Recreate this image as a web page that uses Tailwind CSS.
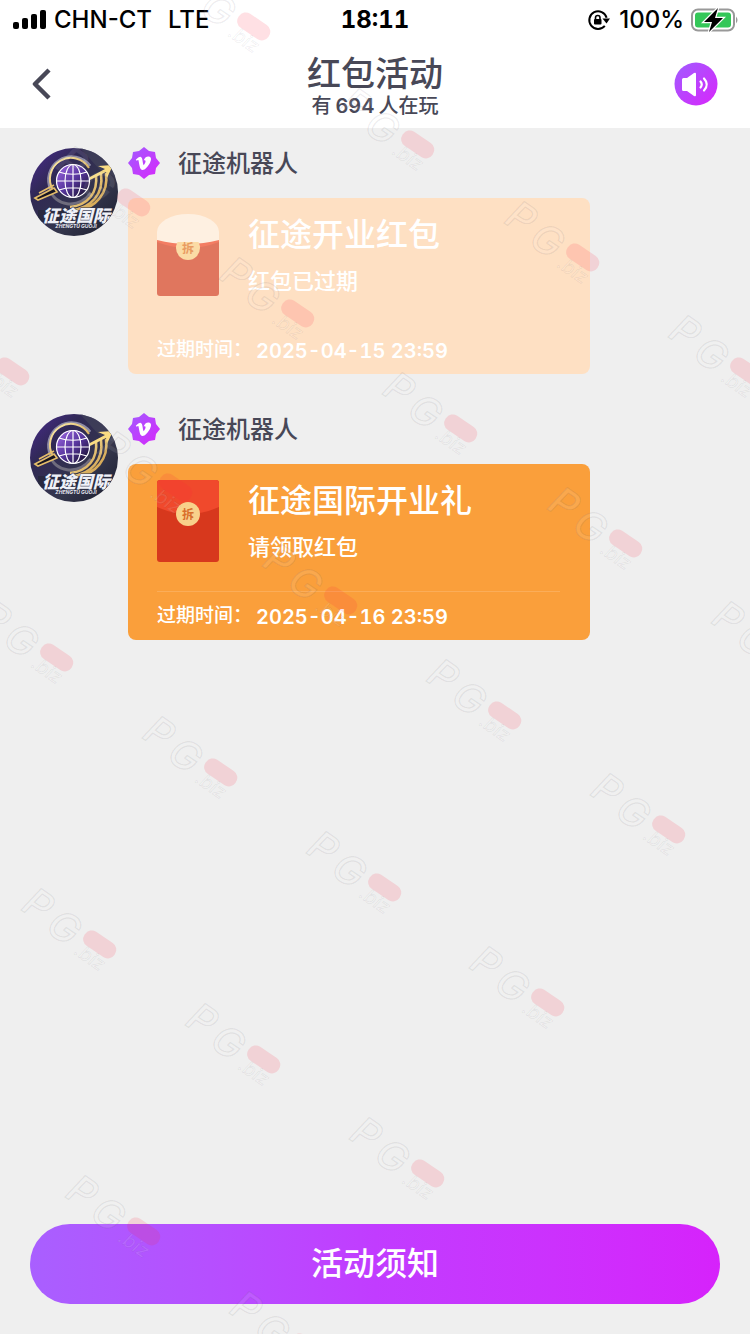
<!DOCTYPE html>
<html lang="zh-CN">
<head>
<meta charset="utf-8">
<meta name="viewport" content="width=device-width, initial-scale=1">
<title>红包活动</title>
<script src="https://cdn.jsdelivr.net/npm/@tailwindcss/browser@4"></script>
</head>
<body class="relative flex min-h-screen flex-col overflow-x-hidden bg-[#efefef] font-['Inter','Noto_Sans_CJK_SC',sans-serif] text-[#484857]">

<svg class="absolute size-0" aria-hidden="true">
  <defs>
    <linearGradient id="violet" x1="0" y1="0" x2="1" y2="1"><stop offset="0" stop-color="#a05cff"/><stop offset="1" stop-color="#d926fb"/></linearGradient>
    <linearGradient id="night" x1="0" y1="0" x2="1" y2="1"><stop offset="0" stop-color="#4a2b91"/><stop offset=".3" stop-color="#302955"/><stop offset=".65" stop-color="#34364c"/><stop offset="1" stop-color="#191b2b"/></linearGradient>
    <linearGradient id="gold" x1="0" y1="0" x2="1" y2="1"><stop offset="0" stop-color="#fff0b0"/><stop offset="1" stop-color="#c8923a"/></linearGradient>
    <linearGradient id="globe" x1="0" y1="0" x2="1" y2="1"><stop offset="0" stop-color="#a46bea"/><stop offset=".5" stop-color="#56359c"/><stop offset="1" stop-color="#0d0c18"/></linearGradient>
    <clipPath id="round"><circle cx="44" cy="44" r="44"/></clipPath>
    <symbol id="avatar" viewBox="0 0 88 88">
      <g clip-path="url(#round)">
        <rect width="88" height="88" fill="url(#night)"/>
        <path d="M50 0h38v30L70 22z" fill="#45465c" opacity=".6"/>
        <path d="M21 42A23 23 0 0 1 60 18" fill="none" stroke="#8d8ba6" stroke-width="3"/>
        <path d="M23 42A21 21 0 0 1 59 20" fill="none" stroke="url(#gold)" stroke-width="2"/>
        <path d="M20 41C24 58 48 62 61 45" fill="none" stroke="#6f6c7d" stroke-width="3"/>
        <path d="M66 27C68 45 58 57 40 59M71 26C74 46 61 60 42 62M76 25C79 46 65 59 48 63" fill="none" stroke="url(#gold)" stroke-width="2.6"/>
        <path d="M5 50l19-10 3 4L8 52zM9 45l15-8" fill="#171521" stroke="#e4bd6a" stroke-width="1.7"/>
        <path d="M58 30l17-9-7-3 15-1-6 13-1-6-16 8z" fill="#f9dc83"/>
        <circle cx="43" cy="33" r="17" fill="url(#globe)"/>
        <g fill="none" stroke="#fff" stroke-width="1.2"><circle cx="43" cy="33" r="16.5"/><ellipse cx="43" cy="33" rx="8" ry="16.5"/><path d="M43 16v34M27 33h32M29 24c8 3 20 3 28 0M29 42c8-3 20-3 28 0"/></g>
        <path d="M8 62h72v12H8z" fill="#242638" opacity=".65"/>
        <text x="46" y="74" text-anchor="middle" font-family="'Noto Sans CJK SC'" font-size="17" font-weight="900" font-style="italic" fill="#eff1f8" stroke="#30334a" stroke-width="1" paint-order="stroke">征途国际</text>
        <text x="46" y="80" text-anchor="middle" font-family="Inter" font-size="5" font-weight="700" font-style="italic" fill="#e3e4ee">ZHENGTU GUOJI</text>
      </g>
    </symbol>
    <symbol id="badge" viewBox="0 0 32 32">
      <path d="M16 0l5 4 6 1 1 6 4 5-4 5-1 6-6 1-5 4-5-4-6-1-1-6-4-5 4-5 1-6 6-1z" fill="url(#violet)"/>
      <path d="M7.800 12.800c2-2 3.800-3.200 5-2.900 2 .5 1.600 5.500 2.900 8.300 1.500-1.900 2.300-3.700 1.600-4.600-.4-.5-1.100-.3-1.600 0 .7-2.700 2.700-4.300 5-4.100 3 .3 2.700 3.700 1.200 6.400-1.900 3.400-5 7-7.300 7-3 0-3-4.600-4.100-9.400-.2-.7-.9-.5-1.800.3z" fill="#fff"/>
    </symbol>
    <symbol id="mark" viewBox="-80 -60 110 110" overflow="visible">
      <g fill="#fff" fill-opacity=".1" stroke="#55525f" stroke-opacity=".11" stroke-width="1.2" font-family="Inter" font-style="italic" transform="rotate(34)">
        <text x="-86" y="16" font-size="40" font-weight="500">P</text>
        <text x="-54" y="20" font-size="40" font-weight="500">G</text>
        <text x="-17" y="23" font-size="19" font-weight="400" stroke-width=".6">.biz</text>
      </g>
      <rect x="-18" y="-8" width="36" height="17" rx="8" transform="rotate(34)" fill="#ff2440" fill-opacity=".14"/>
    </symbol>
  </defs>
</svg>

<header class="bg-white">
  <div class="grid h-10 grid-cols-[1fr_auto_1fr] items-center px-3 text-2xl font-medium text-black">
    <div class="flex items-center gap-2">
      <svg class="h-5 w-[34px]" viewBox="0 0 34 20" aria-hidden="true"><rect x="1" y="12" width="6" height="7" rx="2"/><rect x="10" y="8" width="6" height="11" rx="2"/><rect x="19" y="4" width="6" height="15" rx="2"/><rect x="28" y="0" width="6" height="19" rx="2"/></svg>
      <span class="flex gap-4"><span>CHN-CT</span><span>LTE</span></span>
    </div>
    <time class="font-bold tabular-nums">18:11</time>
    <div class="flex items-center justify-end gap-2">
      <svg class="size-6" viewBox="0 0 24 24" aria-hidden="true"><path d="M17.800 17.800a8.800 8.800 0 1 1 1.800-8" fill="none" stroke="#000" stroke-width="2"/><path d="M15.500 10.500h7.500l-3.500 5z"/><rect x="7" y="11" width="7.500" height="5.500" rx="1"/><path d="M8.500 11.500V9.800a2.200 2.200 0 0 1 4.500 0v1.700" fill="none" stroke="#000" stroke-width="1.600"/></svg>
      <span>100%</span>
      <svg class="-ml-1 h-6 w-[50px]" viewBox="-2 0 50 24" aria-hidden="true"><rect x="2" y="1.500" width="42" height="21" rx="6" fill="#fff" stroke="#999" stroke-width="2"/><rect x="5" y="4.500" width="36" height="15" rx="3" fill="#34c759"/><path d="M46 8.500q3 3.500 0 7z" fill="#999"/><path d="M28 0L14 14h8l-3 10 14-14h-8z" fill="#000" stroke="#fff" stroke-width="2.500" paint-order="stroke"/></svg>
    </div>
  </div>
  <div class="grid h-22 grid-cols-[1fr_auto_1fr] items-center px-8">
    <button type="button" aria-label="返回" class="flex size-10 items-center justify-start"><svg class="h-8 w-5" viewBox="0 0 20 32" fill="none" stroke="#484857" stroke-width="4.500"><path d="M17 2L3 16l14 14" stroke-linejoin="round"/></svg></button>
    <div class="flex flex-col items-center pt-[3px]">
      <h1 class="text-[34px] leading-10 font-medium">红包活动</h1>
      <p class="flex gap-1 text-xl leading-6 font-medium"><span>有</span><span class="font-semibold">694</span><span>人在玩</span></p>
    </div>
    <button type="button" aria-label="声音" class="size-11 justify-self-end"><svg viewBox="0 0 44 44" class="size-11"><circle cx="22" cy="22" r="21.500" fill="url(#violet)"/><path d="M8 17.500q0-1.500 1.500-1.500H13l7-5q2-1 2 1v21q0 2-2 1l-7-5H9.500Q8 29 8 27.500z" fill="#fff"/><path d="M26.500 19.500q2.500 3 0 6M30 16.500q5.500 6 0 12" fill="none" stroke="#fff" stroke-width="2.200" stroke-linecap="round"/></svg></button>
  </div>
</header>

<main class="flex flex-1 flex-col gap-10 px-[30px] pt-5 pb-10">
  <article class="flex items-start gap-[10px]">
    <svg class="size-22 shrink-0" role="img" aria-label="征途国际"><use href="#avatar"/></svg>
    <div class="w-full max-w-[462px]">
      <div class="mb-5 flex h-[30px] items-center gap-[18px]">
        <svg class="size-8" aria-hidden="true"><use href="#badge"/></svg>
        <h2 class="pt-[2px] text-2xl font-medium">征途机器人</h2>
      </div>
      <button type="button" class="block w-full rounded-lg bg-[#fee0c3] pr-[30px] pl-[29px] text-left text-white">
        <span class="flex h-32 items-start gap-[29px] pt-4">
          <svg class="h-[82px] w-[62px] shrink-0" viewBox="0 0 62 82" aria-hidden="true"><path d="M0 25h62v54q0 3-3 3H3q-3 0-3-3z" fill="#e0765e"/><path d="M0 25h62v3q-31 12-62 0z" fill="#f37d63"/><path d="M0 18a31 18 0 0 1 62 0v8q-31 8-62 0z" fill="#fef0e1"/><circle cx="31" cy="34" r="12" fill="#fbdba5"/><path d="M18 28h26V20H18z" fill="#fef0e1"/><text x="31" y="39" text-anchor="middle" font-family="'Noto Sans CJK SC'" font-size="12" font-weight="700" fill="#e99b62">拆</text></svg>
          <span class="flex flex-col gap-3 pt-px font-medium"><span class="text-[32px] leading-10">征途开业红包</span><span class="text-[22px] leading-7">红包已过期</span></span>
        </span>
        <span class="flex h-12 items-center gap-1 pt-px text-[19px] font-medium"><span>过期时间：</span><time class="text-xl font-semibold tabular-nums">2025-04-15 23:59</time></span>
      </button>
    </div>
  </article>

  <article class="flex items-start gap-[10px]">
    <svg class="size-22 shrink-0" role="img" aria-label="征途国际"><use href="#avatar"/></svg>
    <div class="w-full max-w-[462px]">
      <div class="mb-5 flex h-[30px] items-center gap-[18px]">
        <svg class="size-8" aria-hidden="true"><use href="#badge"/></svg>
        <h2 class="pt-[2px] text-2xl font-medium">征途机器人</h2>
      </div>
      <button type="button" class="block w-full rounded-lg bg-[#fa9f3b] pr-[30px] pl-[29px] text-left text-white">
        <span class="flex h-32 items-start gap-[29px] border-b border-[#fbad59] pt-4">
          <svg class="h-[82px] w-[62px] shrink-0" viewBox="0 0 62 82" aria-hidden="true"><rect width="62" height="82" rx="3" fill="#d7381d"/><path d="M3 0h56q3 0 3 3v24q-31 14-62 0V3q0-3 3-3z" fill="#f0492c"/><circle cx="31" cy="34" r="12" fill="#f8d18a"/><text x="31" y="39" text-anchor="middle" font-family="'Noto Sans CJK SC'" font-size="12" font-weight="700" fill="#d96e2c">拆</text></svg>
          <span class="flex flex-col gap-3 pt-px font-medium"><span class="text-[32px] leading-10">征途国际开业礼</span><span class="text-[22px] leading-7">请领取红包</span></span>
        </span>
        <span class="flex h-12 items-center gap-1 pt-px text-[19px] font-medium"><span>过期时间：</span><time class="text-xl font-semibold tabular-nums">2025-04-16 23:59</time></span>
      </button>
    </div>
  </article>
</main>

<footer class="px-[30px] pb-[30px]">
  <button type="button" class="h-20 w-full rounded-full bg-linear-to-r from-[#a95fff] via-[#c13cff] to-[#d622fb] text-[32px] font-medium text-white">活动须知</button>
</footer>

<!-- Repeating watermark laid over the page -->
<svg class="pointer-events-none absolute inset-0 h-full w-full" aria-hidden="true">
  <g id="marks">
    <use href="#mark" x="174" y="-34" width="110" height="110"/>
    <use href="#mark" x="338" y="84" width="110" height="110"/>
    <use href="#mark" x="54" y="142" width="110" height="110"/>
    <use href="#mark" x="503" y="197" width="110" height="110"/>
    <use href="#mark" x="218" y="253" width="110" height="110"/>
    <use href="#mark" x="-67" y="311" width="110" height="110"/>
    <use href="#mark" x="667" y="311" width="110" height="110"/>
    <use href="#mark" x="381" y="368" width="110" height="110"/>
    <use href="#mark" x="96" y="427" width="110" height="110"/>
    <use href="#mark" x="546" y="483" width="110" height="110"/>
    <use href="#mark" x="261" y="540" width="110" height="110"/>
    <use href="#mark" x="-23" y="597" width="110" height="110"/>
    <use href="#mark" x="710" y="597" width="110" height="110"/>
    <use href="#mark" x="425" y="655" width="110" height="110"/>
    <use href="#mark" x="141" y="712" width="110" height="110"/>
    <use href="#mark" x="589" y="769" width="110" height="110"/>
    <use href="#mark" x="305" y="827" width="110" height="110"/>
    <use href="#mark" x="20" y="884" width="110" height="110"/>
    <use href="#mark" x="468" y="942" width="110" height="110"/>
    <use href="#mark" x="184" y="999" width="110" height="110"/>
    <use href="#mark" x="348" y="1113" width="110" height="110"/>
    <use href="#mark" x="64" y="1171" width="110" height="110"/>
    <use href="#mark" x="228" y="1287" width="110" height="110"/>
  </g>
</svg>
</body>
</html>
